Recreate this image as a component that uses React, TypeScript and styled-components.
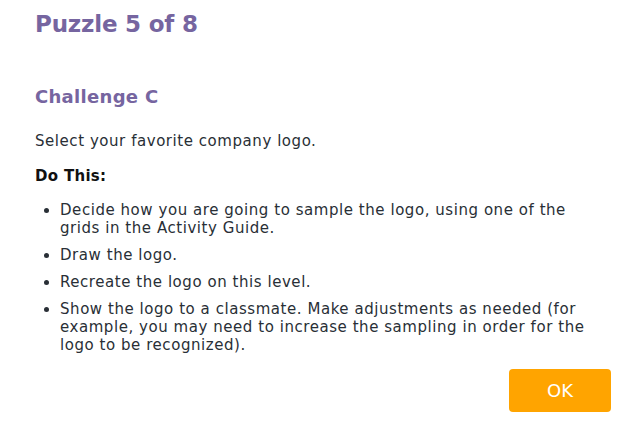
import React from "react";
import styled, { createGlobalStyle } from "styled-components";

const Global = createGlobalStyle`
  html, body { margin: 0; padding: 0; background: #fff; }
  body { font-family: "DejaVu Sans", "Noto Sans", sans-serif; }
`;

const Dialog = styled.div`
  width: 618px;
  height: 442px;
  box-sizing: border-box;
  padding: 9px 7px 0 35px;
  display: flex;
  flex-direction: column;
  color: #292f36;
`;

const Title = styled.h1`
  margin: 0;
  font-size: 23px;
  line-height: 30px;
  font-weight: bold;
  color: #7665a0;
  letter-spacing: -0.2px;
`;

const Subtitle = styled.h2`
  margin: 46px 0 0;
  font-size: 18px;
  line-height: 24px;
  font-weight: bold;
  color: #7665a0;
  letter-spacing: 0.3px;
`;

const Para = styled.p<{ $bold?: boolean }>`
  margin: ${(p) => (p.$bold ? "15px" : "22px")} 0 0;
  font-size: 15px;
  line-height: 20px;
  letter-spacing: ${(p) => (p.$bold ? "0.3px" : "0.55px")};
  font-weight: ${(p) => (p.$bold ? "bold" : "normal")};
  color: ${(p) => (p.$bold ? "#111" : "#292f36")};
`;

const List = styled.ul`
  margin: 15px 0 0;
  padding: 0 0 0 25px;
  font-size: 15px;
  line-height: 18px;
  letter-spacing: 0.55px;
`;

const Item = styled.li`
  margin-bottom: 9px;
`;

const Footer = styled.div`
  display: flex;
  justify-content: flex-end;
  margin-top: 6px;
`;

const OkButton = styled.button`
  width: 102px;
  height: 43px;
  border: none;
  border-radius: 4px;
  background: #ffa400;
  color: #fff;
  font-family: "DejaVu Sans", sans-serif;
  font-size: 18px;
  cursor: pointer;
`;

export default function App() {
  return (
    <>
      <Global />
      <Dialog>
        <Title>Puzzle 5 of 8</Title>
        <Subtitle>Challenge C</Subtitle>
        <Para>Select your favorite company logo.</Para>
        <Para $bold>Do This:</Para>
        <List>
          <Item>Decide how you are going to sample the logo, using one of the grids in the Activity Guide.</Item>
          <Item>Draw the logo.</Item>
          <Item>Recreate the logo on this level.</Item>
          <Item>
            Show the logo to a classmate. Make adjustments as needed (for example, you may need to increase the
            sampling in order for the logo to be recognized).
          </Item>
        </List>
        <Footer>
          <OkButton>OK</OkButton>
        </Footer>
      </Dialog>
    </>
  );
}
